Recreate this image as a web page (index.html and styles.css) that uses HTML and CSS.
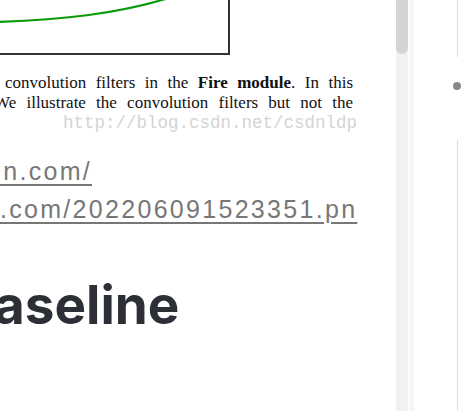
FILE: index.html
```html
<!DOCTYPE html>
<html>
<head>
<meta charset="utf-8">
<link rel="stylesheet" href="styles.css">
</head>
<body>
<div class="app">
  <main class="content">
    <div class="figure">
      <div class="plot">
        <svg class="curve" width="230" height="55" viewBox="0 0 230 55">
          <path d="M-5 22 C 60 20, 120 14, 175 -4" fill="none" stroke="#0a9a0a" stroke-width="2.2"/>
        </svg>
      </div>
      <div class="caption">
        <p class="cap-line cap-one">convolution filters in the <b>Fire module</b>. In this</p>
        <p class="cap-line cap-two">We illustrate the convolution filters but not the</p>
        <p class="watermark">http://blog.csdn.net/csdnldp</p>
      </div>
    </div>
    <p class="link-para"><a class="link" href="#"><span class="l1">dn.com/</span><br><span class="l2">.com/202206091523351.pn</span></a></p>
    <h1 class="title">aseline</h1>
  </main>
  <div class="scrollbar"><div class="thumb"></div></div>
  <div class="gap"></div>
  <div class="strip"></div>
  <aside class="toc">
    <div class="toc-line top"></div>
    <div class="toc-dot"></div>
    <div class="toc-line bottom"></div>
  </aside>
</div>
</body>
</html>
```
FILE: styles.css
```css
html, body { margin: 0; padding: 0; background: #fff; }
.app { display: flex; width: 469px; height: 411px; overflow: hidden; }
.content { width: 396px; flex: none; overflow: hidden; }
.figure { width: 396px; }
.plot { width: 228px; height: 53px; border-right: 2px solid #333; border-bottom: 2px solid #333; overflow: hidden; }
.curve { display: block; }
.caption { font-family: "Liberation Serif", serif; font-size: 17px; color: #111; padding-top: 18px; }
.cap-line { margin: 0; line-height: 20px; height: 20px; text-align: justify; text-align-last: justify; }
.cap-one { margin-left: 5px; width: 348px; }
.cap-two { margin-left: -6px; width: 359px; }
.watermark { margin: 1px 0 0 63px; font-family: "Liberation Mono", monospace; font-size: 17.5px; line-height: 18px; color: #d4d4d4; }
.link-para { margin: 20px 0 0 0; font-family: "Liberation Sans", Arial, sans-serif; font-size: 25px; line-height: 38px; letter-spacing: 2.3px; }
.link { color: #777; text-decoration: underline; text-underline-offset: 4px; }
.l1 { margin-left: -13px; }
.title { margin: 47px 0 0 -6px; font-family: Inter, sans-serif; font-weight: 700; font-size: 53px; line-height: 60px; color: #2c3036; }
.scrollbar { width: 12px; flex: none; background: #f1f1f1; }
.thumb { height: 54px; background: #d4d4d4; border-radius: 0 0 6px 6px; }
.gap { width: 1px; flex: none; background: #fff; }
.strip { width: 5px; flex: none; background: #f6f6f6; }
.toc { flex: 1; display: flex; flex-direction: column; align-items: flex-start; padding-left: 43px; }
.toc-line { width: 1px; background: #ddd; }
.toc-line.top { height: 57px; }
.toc-line.bottom { flex: 1; margin-top: 50px; }
.toc-dot { width: 8px; height: 8px; border-radius: 50%; background: #888; margin: 25px 0 0 -4px; }
```
